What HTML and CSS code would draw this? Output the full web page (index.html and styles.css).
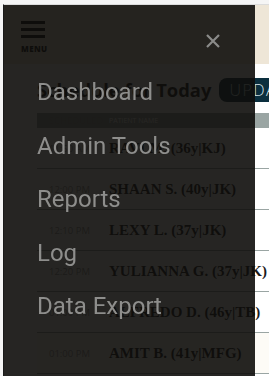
FILE: index.html
```html
<!DOCTYPE html>
<html lang="en">
<head>
    <meta charset="UTF-8">
    <meta name="viewport" content="width=device-width, initial-scale=1.0">
    <title>Schedule</title>
    <link rel="stylesheet" href="styles.css">
</head>
<body>
    <div class="app">
        <header class="topbar">
            <div class="menu-toggle">
                <span class="bar"></span>
                <span class="bar"></span>
                <span class="bar"></span>
                <span class="menu-label">MENU</span>
            </div>
        </header>

        <main class="main">
            <div class="title-row">
                <h1>Schedule for Today</h1>
                <button class="update-btn">UPDATE</button>
            </div>

            <div class="schedule">
                <div class="schedule-head">
                    <span class="col-time">Scheduled</span>
                    <span class="col-name">Patient Name</span>
                </div>
                <div class="row"><span class="col-time">11:50 AM</span><span class="col-name">RAVI M. (36y|KJ)</span></div>
                <div class="row"><span class="col-time">12:00 PM</span><span class="col-name">SHAAN S. (40y|JK)</span></div>
                <div class="row"><span class="col-time">12:10 PM</span><span class="col-name">LEXY L. (37y|JK)</span></div>
                <div class="row"><span class="col-time">12:20 PM</span><span class="col-name">YULIANNA G. (37y|JK)</span></div>
                <div class="row"><span class="col-time">01:00 PM</span><span class="col-name">ALFREDO D. (46y|TB)</span></div>
                <div class="row last"><span class="col-time">01:00 PM</span><span class="col-name">AMIT B. (41y|MFG)</span></div>
            </div>
        </main>
    </div>

    <!-- slide-out navigation, open -->
    <nav class="drawer">
        <div class="drawer-top">
            <span class="close">
                <svg width="16" height="16" viewBox="0 0 16 16">
                    <path d="M2 2 L14 14 M14 2 L2 14" stroke="#8b8b89" stroke-width="2.2" fill="none"/>
                </svg>
            </span>
        </div>
        <ul class="drawer-links">
            <li>Dashboard</li>
            <li>Admin Tools</li>
            <li>Reports</li>
            <li>Log</li>
            <li>Data Export</li>
        </ul>
    </nav>
</body>
</html>
```

FILE: styles.css
```css
:root {
    --beige: #eee6d7;
    --teal: #0b2f3e;
    --rule: #9aa5a3;
    --ink: #1b1b1b;
}

* {
    margin: 0;
    padding: 0;
    box-sizing: border-box;
}

body {
    font-family: "Open Sans", sans-serif;
    background: #f5f5f5;
    padding: 4px 0 0 3px;
    overflow: hidden;
    height: 376px;
}

.app {
    border-left: 1px solid #1a1a1a;
    border-top: 1px solid #dcdcdc;
    background: #fff;
    min-height: 100%;
    width: 300px;
}

.topbar {
    background: var(--beige);
    height: 59px;
    padding: 16px 0 0 17px;
}

.menu-toggle {
    display: flex;
    flex-direction: column;
    width: 24px;
    gap: 4px;
}

.bar {
    display: block;
    height: 3px;
    background: #111;
}

.menu-label {
    font-size: 8px;
    font-weight: 800;
    letter-spacing: 0.4px;
    color: #111;
    margin-top: 2px;
    line-height: 10px;
}

.main {
    padding: 0 0 0 33px;
    background: #fff;
}

.title-row {
    display: flex;
    align-items: center;
    height: 49px;
    padding-top: 2px;
}

.title-row h1 {
    font-size: 18.4px;
    font-weight: 700;
    color: var(--ink);
    white-space: nowrap;
}

.update-btn {
    margin-left: 8px;
    height: 24px;
    padding: 0 10px;
    border: none;
    border-radius: 8px;
    background: var(--teal);
    color: #d8e6ec;
    font-family: "Open Sans", sans-serif;
    font-size: 16px;
    font-weight: 300;
    letter-spacing: 1.5px;
}

.schedule-head {
    display: flex;
    align-items: center;
    height: 15px;
    background: var(--rule);
    color: #fff;
    font-size: 7px;
    text-transform: uppercase;
}

.row {
    display: flex;
    align-items: center;
    height: 41px;
    border-bottom: 1px solid var(--rule);
}

.row.last {
    background: #fdfbf6;
}

.col-time {
    width: 72px;
    padding-left: 12px;
    font-size: 9.5px;
    color: #9a9a9a;
    white-space: nowrap;
}

.col-name {
    font-family: "Liberation Serif", serif;
    white-space: nowrap;
}

.row .col-name {
    font-size: 15px;
    font-weight: 700;
    color: var(--ink);
}

.schedule-head .col-name {
    font-family: "Open Sans", sans-serif;
}

/* drawer */
.drawer {
    position: fixed;
    top: 5px;
    left: 4px;
    bottom: 0;
    width: 251px;
    background: rgba(14, 13, 11, 0.9);
}

.drawer-top {
    height: 73px;
    display: flex;
    justify-content: flex-end;
    padding: 27px 34px 0 0;
}

.drawer-links {
    list-style: none;
    padding-left: 33px;
}

.drawer-links li {
    font-family: Roboto, "Open Sans", sans-serif;
    font-size: 24px;
    color: #8e8e8c;
    height: 53.5px;
    line-height: 28px;
}
```
